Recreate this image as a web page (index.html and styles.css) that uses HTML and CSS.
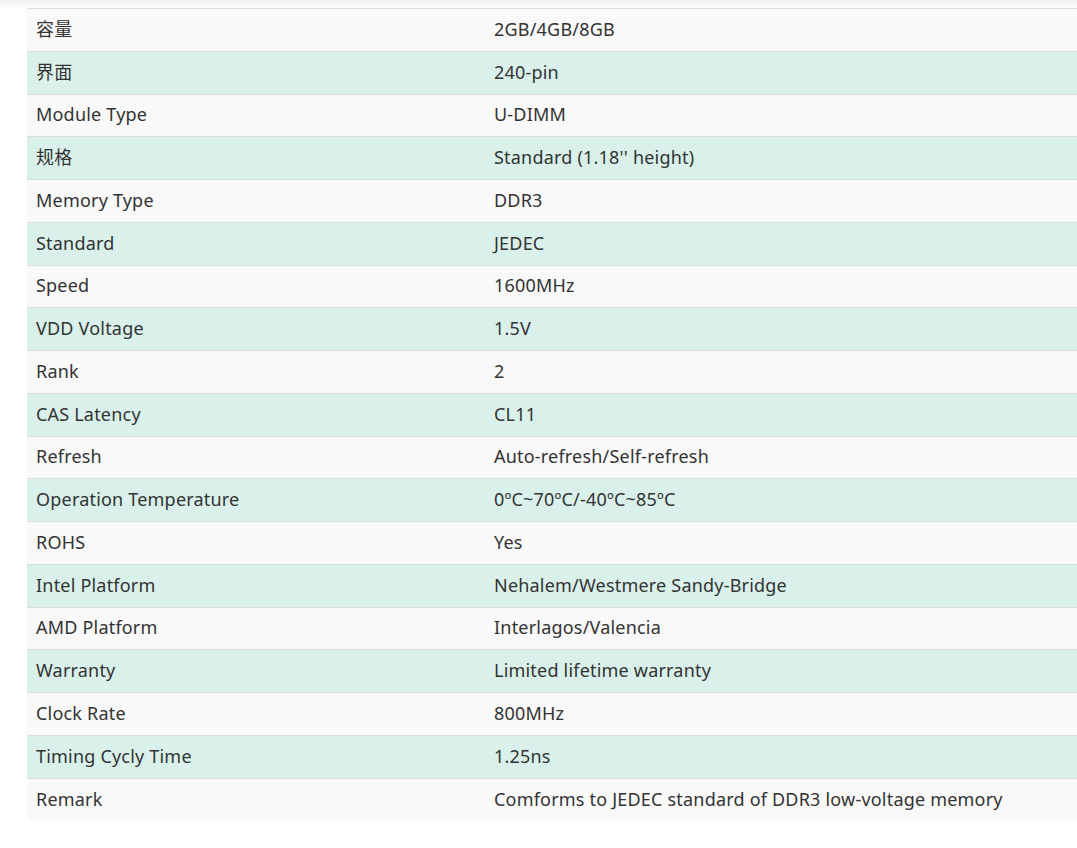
FILE: index.html
```html
<!DOCTYPE html>
<html lang="zh">
<head>
<meta charset="utf-8">
<link rel="stylesheet" href="styles.css">
</head>
<body>
<div class="topfade"></div>
<div class="wrap">
<table class="spec">
<tbody>
<tr class="odd"><td class="k">容量</td><td class="v">2GB/4GB/8GB</td></tr>
<tr class="even"><td class="k">界面</td><td class="v">240-pin</td></tr>
<tr class="odd"><td class="k">Module Type</td><td class="v">U-DIMM</td></tr>
<tr class="even"><td class="k">规格</td><td class="v">Standard (1.18'' height)</td></tr>
<tr class="odd"><td class="k">Memory Type</td><td class="v">DDR3</td></tr>
<tr class="even"><td class="k">Standard</td><td class="v">JEDEC</td></tr>
<tr class="odd"><td class="k">Speed</td><td class="v">1600MHz</td></tr>
<tr class="even"><td class="k">VDD Voltage</td><td class="v">1.5V</td></tr>
<tr class="odd"><td class="k">Rank</td><td class="v">2</td></tr>
<tr class="even"><td class="k">CAS Latency</td><td class="v">CL11</td></tr>
<tr class="odd"><td class="k">Refresh</td><td class="v">Auto-refresh/Self-refresh</td></tr>
<tr class="even"><td class="k">Operation Temperature</td><td class="v">0ºC~70ºC/-40ºC~85ºC</td></tr>
<tr class="odd"><td class="k">ROHS</td><td class="v">Yes</td></tr>
<tr class="even"><td class="k">Intel Platform</td><td class="v">Nehalem/Westmere Sandy-Bridge</td></tr>
<tr class="odd"><td class="k">AMD Platform</td><td class="v">Interlagos/Valencia</td></tr>
<tr class="even"><td class="k">Warranty</td><td class="v">Limited lifetime warranty</td></tr>
<tr class="odd"><td class="k">Clock Rate</td><td class="v">800MHz</td></tr>
<tr class="even"><td class="k">Timing Cycly Time</td><td class="v">1.25ns</td></tr>
<tr class="odd"><td class="k">Remark</td><td class="v">Comforms to JEDEC standard of DDR3 low-voltage memory</td></tr>
</tbody>
</table>
</div>
</body>
</html>
```
FILE: styles.css
```css
html, body {
  margin: 0;
  padding: 0;
  background: #fff;
  overflow: hidden;
}
body {
  font-family: "Noto Sans", "Noto Sans CJK SC", sans-serif;
  color: #333;
  font-size: 18px;
}
.topfade {
  height: 8px;
  background: linear-gradient(#f1f1f1, #fbfbfb);
}
.wrap {
  padding-left: 27px;
  width: 1100px;
}
.spec {
  border-collapse: collapse;
  width: 1100px;
  table-layout: fixed;
}
.spec tr {
  border-top: 1px solid #dcdcdc;
  height: 42.76px;
}
.spec tr.odd { background: #f9f9f9; }
.spec tr.even { background: #d9f1ea; }
.spec td {
  padding: 0 9px 2px;
  line-height: 24px;
  vertical-align: middle;
  white-space: nowrap;
  letter-spacing: 0.2px;
}
.spec td.k { width: 440px; }
```
